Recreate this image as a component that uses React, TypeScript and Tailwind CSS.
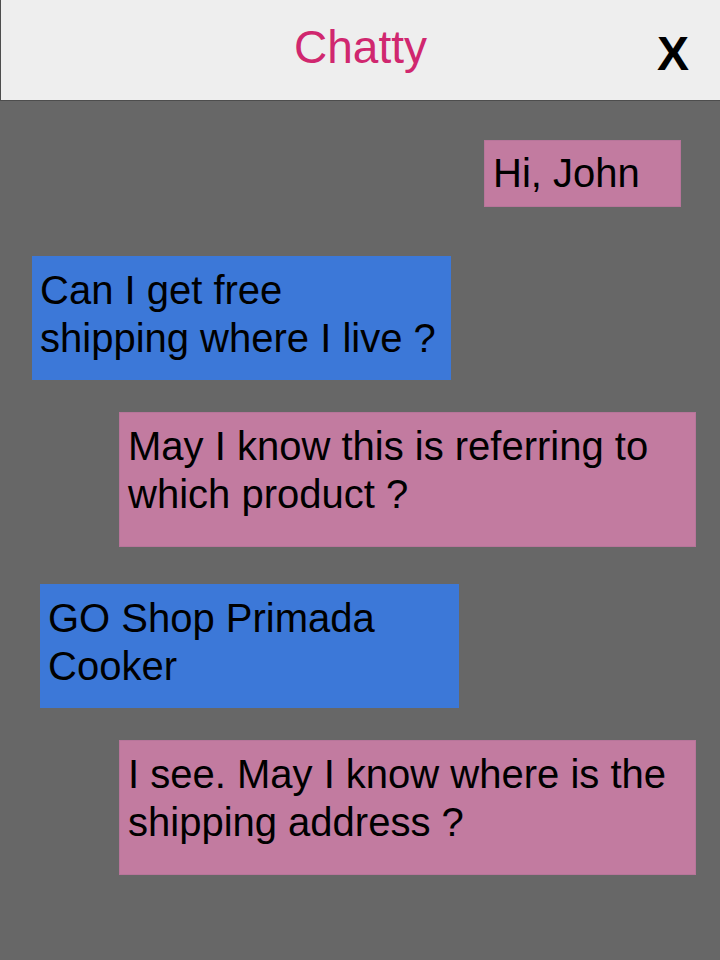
import React from "react";

type Msg = {
  id: number;
  from: "agent" | "user";
  lines: string[];
  box: string;
};

// positions taken from the mock; each bubble sits on its own row
const messages: Msg[] = [
  { id: 1, from: "agent", lines: ["Hi, John"], box: "mt-[39px] self-end mr-[39px] w-[197px] pt-[8px] pb-[9px]" },
  { id: 2, from: "user", lines: ["Can I get free", "shipping where I live ?"], box: "mt-[49px] ml-[32px] w-[419px] pt-[10px] pb-[18px]" },
  { id: 3, from: "agent", lines: ["May I know this is referring to", "which product ?"], box: "mt-[32px] self-end mr-[24px] w-[577px] pt-[9px] pb-[28px]" },
  { id: 4, from: "user", lines: ["GO Shop Primada", "Cooker"], box: "mt-[37px] ml-[40px] w-[419px] pt-[10px] pb-[18px]" },
  { id: 5, from: "agent", lines: ["I see. May I know where is the", "shipping address ?"], box: "mt-[32px] self-end mr-[24px] w-[577px] pt-[9px] pb-[28px]" },
];

function Bubble({ msg }: { msg: Msg }) {
  const color = msg.from === "agent" ? "bg-[#c27ba0] border border-[#b7759a]" : "bg-[#3c78d8]";
  return (
    <div className={`${color} ${msg.box} pl-[8px] text-[40px] leading-[48px] text-black`}>
      {msg.lines.map((line, i) => (
        <div key={i} className="whitespace-nowrap">
          {line}
        </div>
      ))}
    </div>
  );
}

export default function App() {
  return (
    <div
      className="min-h-screen w-[720px] bg-[#676767] flex flex-col"
      style={{ fontFamily: '"Liberation Sans", Arial, sans-serif' }}
    >
      <header className="h-[101px] bg-[#eeeeee] border-l border-b border-[#4d4d4d] flex items-start relative shrink-0">
        <h1 className="flex-1 text-center text-[46px] leading-none text-[#d0276f] mt-[24px]">Chatty</h1>
        <button className="absolute right-[31px] top-[30px] text-[48px] font-bold leading-none text-black">X</button>
      </header>

      {messages.map((m) => (
        <Bubble key={m.id} msg={m} />
      ))}
    </div>
  );
}
